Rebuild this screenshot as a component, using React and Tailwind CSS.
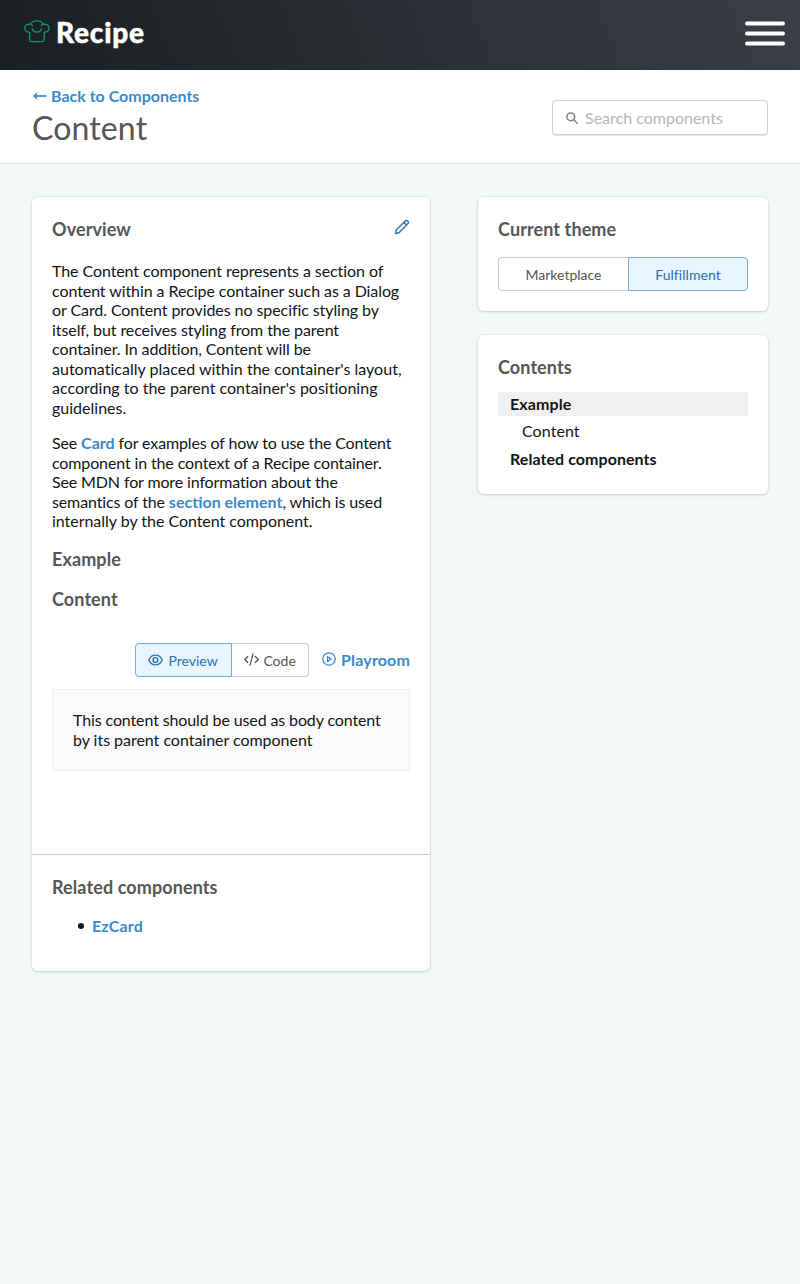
import React from "react";

const cardClass =
  "rounded-md bg-white shadow-[0_0_1px_1px_rgba(0,0,0,0.04),0_1px_3px_rgba(0,0,0,0.14)]";
const headingClass = "text-[18px] leading-6 font-bold tracking-[0.1px] text-[#565656]";
const linkClass = "font-bold tracking-normal text-[#3b8acb]";

function ChefHat() {
  return (
    <svg className="h-[24px] w-[26px]" viewBox="0 0 26 24" fill="none" stroke="#0f9a63" strokeWidth="1.3" strokeLinecap="round" strokeLinejoin="round">
      <path d="M5.6 19.8V12.3C2.8 12.2 .8 10.4 .8 8C.8 5.4 3.1 3.8 6.4 4.4C7.4 2.2 9.5 .8 12.9 .8C16.3 .8 18.4 2.2 19.4 4.4C22.8 3.8 25 5.4 25 8C25 10.4 23.1 12.2 20.2 12.3V19.8C20.2 21 19.5 21.6 18.4 21.6H7.4C6.2 21.6 5.6 21 5.6 19.8" />
      <path d="M8.2 8.6C8.6 10.8 10.2 12.2 12.9 12.2C15.6 12.2 17.2 10.8 17.6 8.6M6.4 4.4C7.4 4.6 8.1 5 8.6 5.6M19.4 4.4C18.4 4.6 17.7 5 17.2 5.6" />
    </svg>
  );
}

function MenuIcon() {
  return (
    <svg className="h-7 w-10" viewBox="0 0 40 28" fill="none" stroke="#fff" strokeWidth="4" strokeLinecap="round">
      <path d="M2 3.4H38M2 13.4H38M2 23.4H38" />
    </svg>
  );
}

function ArrowLeft() {
  return (
    <svg className="mr-[4px] h-[10px] w-[15px]" viewBox="0 0 15 10" fill="none" stroke="currentColor" strokeWidth="1.7">
      <path d="M2 5H14.5" />
      <path d="M.8 5L5 1.5V8.5Z" fill="currentColor" stroke="none" />
    </svg>
  );
}

function Pencil() {
  return (
    <svg className="h-4 w-4" viewBox="0 0 16 16" fill="none" stroke="#3b7fb8" strokeWidth="1.6" strokeLinejoin="round">
      <path d="M1.5 14.5L2.4 10.8L11.1 2.1C11.9 1.3 13 1.3 13.8 2.1C14.6 2.9 14.6 4 13.8 4.8L5.1 13.6Z" />
      <path d="M9.8 3.4L12.5 6.1" />
    </svg>
  );
}

function Eye() {
  return (
    <svg className="-mt-0.5 h-[12px] w-[15px]" viewBox="0 0 15 12" fill="none" stroke="currentColor" strokeWidth="1.4">
      <path d="M.8 6C2.2 2.8 4.6 1.1 7.5 1.1C10.4 1.1 12.8 2.8 14.2 6C12.8 9.2 10.4 10.9 7.5 10.9C4.6 10.9 2.2 9.2 .8 6Z" />
      <circle cx="7.5" cy="6" r="2.4" />
    </svg>
  );
}

function CodeIcon() {
  return (
    <svg className="-mt-0.5 h-[13px] w-[15px]" viewBox="0 0 15 13" fill="none" stroke="currentColor" strokeWidth="1.3" strokeLinecap="round" strokeLinejoin="round">
      <path d="M3.7 3.5L.7 6.5L3.7 9.5M11.3 3.5L14.3 6.5L11.3 9.5M9 .8L6 12.2" />
    </svg>
  );
}

function PlayIcon() {
  return (
    <svg className="-mt-0.5 h-[14px] w-[14px]" viewBox="0 0 14 14" fill="none" stroke="currentColor" strokeWidth="1.3" strokeLinejoin="round">
      <circle cx="7" cy="7" r="6.2" />
      <path d="M5.5 4.6L9.3 7L5.5 9.4Z" />
    </svg>
  );
}

function SearchIcon() {
  return (
    <svg className="h-3 w-3" viewBox="0 0 12 12" fill="none" stroke="#808080" strokeWidth="1.5" strokeLinecap="round">
      <circle cx="4.8" cy="4.8" r="3.9" />
      <path d="M7.8 7.8L11.2 11.2" />
    </svg>
  );
}

export default function App() {
  return (
    <div className="min-h-[1284px] bg-[#f2f8f6] font-['Lato',sans-serif] text-base leading-[19.5px] text-[#121517]">
      <header className="flex h-[70px] items-start justify-between bg-[linear-gradient(70deg,#1b1f24,#3a3f46)] pt-[20px] pr-[15px] pl-6">
        <a className="flex items-start">
          <ChefHat />
          <span className="-mt-[5px] ml-[6px] text-[28px] leading-[34px] font-black tracking-[0.8px] text-white [-webkit-text-stroke:0.5px_white]">Recipe</span>
        </a>
        <button aria-label="Menu">
          <MenuIcon />
        </button>
      </header>

      <section className="flex h-[94px] items-start justify-between border-b border-[#dfe3e3] bg-white px-8">
        <div className="pt-4">
          <a className={`flex h-5 items-center ${linkClass}`}>
            <ArrowLeft />
            Back to Components
          </a>
          <h1 className="mt-[2px] text-[32px] leading-10 tracking-[0.15px] text-[#565656]">Content</h1>
        </div>
        <label className="mt-[30px] flex h-[35px] w-[216px] items-center rounded-[4px] border border-[#cfd2d4] bg-white pl-[13px] shadow-[0_1px_1px_rgba(0,0,0,0.1)]">
          <SearchIcon />
          <input className="ml-[7px] w-[170px] outline-none placeholder:text-[#b4b6b8]" placeholder="Search components" />
        </label>
      </section>

      <main className="flex items-start justify-between px-8 pt-[33px]">
        <article className={`h-[774px] w-[398px] ${cardClass}`}>
          <div className="h-[658px] border-b border-[#c8cbcd] px-5 pt-5">
            <div className="flex items-start justify-between">
              <h2 className={headingClass}>Overview</h2>
              <span className="pt-[2px]"><Pencil /></span>
            </div>
            <p className="mt-5 pr-1 tracking-[-0.08px]">
              The Content component represents a section of content within a Recipe container such as a Dialog or Card. Content provides no specific styling by itself, but receives styling from the parent container. In addition, Content will be{" "}
              <span className="tracking-[0.01px]">automatically placed within the container's layout, according to the parent container's positioning guidelines.</span>
            </p>
            <p className="mt-4 pr-3 tracking-[-0.13px]">
              See <a className={linkClass}>Card</a> for examples of how to use the Content component in the context of a Recipe container. See MDN for more information about the semantics of the <a className={linkClass}>section element</a>, which is used <span className="tracking-[-0.03px]">internally by the Content component.</span>
            </p>
            <h2 className={`mt-4 ${headingClass}`}>Example</h2>
            <h3 className={`mt-4 ${headingClass}`}>Content</h3>
            <div className="mt-8 flex items-center justify-end">
              <div className="flex h-[34px] text-[14px]">
                <button className="flex w-[97px] items-center justify-center gap-[5px] rounded-l-[4px] border border-[#7fa9ca] bg-[#e6f5ff] pt-0.5 pr-px text-[#2d70ac]">
                  <Eye />
                  Preview
                </button>
                <button className="flex w-[77px] items-center justify-center gap-1 rounded-r-[4px] border border-l-0 border-[#c8cbcd] bg-white pt-0.5 text-[#565656]">
                  <CodeIcon />
                  Code
                </button>
              </div>
              <a className={`ml-[13px] flex items-center gap-[5px] pt-px ${linkClass}`}>
                <PlayIcon />
                <span className="tracking-[0.15px]">Playroom</span>
              </a>
            </div>
            <div className="mt-3 h-[82px] border border-[#f1f1f1] bg-[#fafafa] pt-5 pr-4 pl-5 leading-5 tracking-[-0.12px]">
              This content should be used as body content <span className="tracking-[-0.03px]">by its parent container component</span>
            </div>
          </div>
          <div className="px-5 pt-5">
            <h2 className={headingClass}>Related components</h2>
            <ul className="mt-[18px] pl-[26px]">
              <li className="flex items-center">
                <span className="mr-2 h-1.5 w-1.5 rounded-full bg-[#121517]" />
                <a className="-mt-px font-bold tracking-[0.15px] text-[#3b8acb]">EzCard</a>
              </li>
            </ul>
          </div>
        </article>

        <aside className="flex w-[290px] flex-col gap-6">
          <section className={`h-[114px] px-5 pt-5 ${cardClass}`}>
            <h2 className={headingClass}>Current theme</h2>
            <div className="mt-4 flex h-[34px] text-[14px]">
              <button className="w-[130px] rounded-l-[4px] border border-r-0 border-[#c8cbcd] pt-px text-[#565656]">Marketplace</button>
              <button className="w-[120px] rounded-r-[4px] border border-[#7fa9ca] bg-[#e6f5ff] pt-px tracking-[0.05px] text-[#2d70ac]">Fulfillment</button>
            </div>
          </section>
          <nav className={`h-[159px] px-5 pt-5 ${cardClass}`}>
            <h2 className={headingClass}>Contents</h2>
            <ul className="mt-[13px] flex flex-col gap-1">
              <li className="flex h-[23.5px] items-center bg-[#f1f1f1] pl-3 font-bold tracking-[0.1px]">Example</li>
              <li className="flex h-[23.5px] items-center pb-0.5 pl-6 tracking-[0.08px]">Content</li>
              <li className="flex h-[23.5px] items-center pl-3 font-bold tracking-[0.06px]">Related components</li>
            </ul>
          </nav>
        </aside>
      </main>
    </div>
  );
}
